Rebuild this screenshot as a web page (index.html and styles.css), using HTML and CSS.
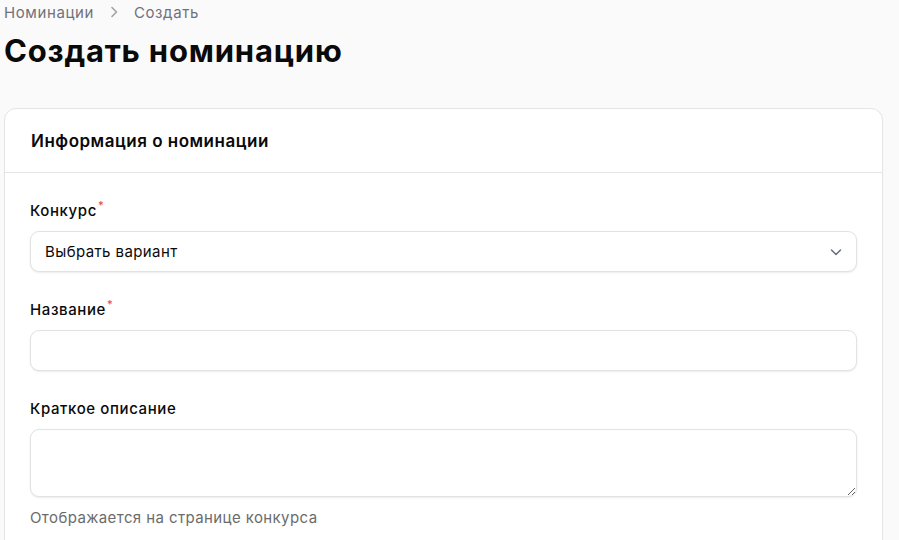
FILE: index.html
```html
<!DOCTYPE html>
<html lang="ru">
<head>
<meta charset="utf-8">
<title>Создать номинацию</title>
<link rel="stylesheet" href="styles.css">
</head>
<body>
<div class="page">
  <nav class="breadcrumbs">
    <a class="crumb" href="#">Номинации</a>
    <svg class="crumb-sep" viewBox="0 0 20 20" width="20" height="20" aria-hidden="true">
      <path d="M8 5.5 12.5 10 8 14.5" fill="none" stroke="currentColor" stroke-width="1.6" stroke-linecap="round" stroke-linejoin="round"/>
    </svg>
    <span class="crumb">Создать</span>
  </nav>
  <h1 class="page-title">Создать номинацию</h1>

  <form class="card">
    <div class="card-header">
      <h2 class="card-title">Информация о номинации</h2>
    </div>
    <div class="card-body">
      <div class="field">
        <label class="label">Конкурс<sup class="req">*</sup></label>
        <div class="control select">
          <span class="select-value">Выбрать вариант</span>
          <svg class="select-icon" viewBox="0 0 20 20" width="20" height="20" aria-hidden="true">
            <path d="M5.5 8 10 12.5 14.5 8" fill="none" stroke="currentColor" stroke-width="1.6" stroke-linecap="round" stroke-linejoin="round"/>
          </svg>
        </div>
      </div>
      <div class="field">
        <label class="label">Название<sup class="req">*</sup></label>
        <input class="control input" type="text">
      </div>
      <div class="field">
        <label class="label">Краткое описание</label>
        <textarea class="control textarea"></textarea>
        <p class="hint">Отображается на странице конкурса</p>
      </div>
    </div>
  </form>
</div>
</body>
</html>
```

FILE: styles.css
```css
* { box-sizing: border-box; }

html, body {
  margin: 0;
  background: #fafafa;
  font-family: Inter, "Noto Sans", sans-serif;
  color: #0a0a0a;
}

.page {
  padding: 0 16px 0 4px;
}

.breadcrumbs {
  display: flex;
  align-items: center;
  gap: 10px;
  height: 24px;
  font-size: 15px;
  letter-spacing: 0.6px;
  color: #71717a;
}

.crumb {
  color: inherit;
  text-decoration: none;
}

.crumb-sep {
  width: 20px;
  height: 20px;
  color: #a1a1aa;
}

.page-title {
  margin: 9px 0 0;
  font-size: 31px;
  line-height: 36px;
  font-weight: 700;
  letter-spacing: 0.8px;
}

.card {
  margin-top: 39px;
  background: #fff;
  border: 1px solid #e5e5e5;
  border-radius: 12px;
  box-shadow: 0 1px 2px rgba(0, 0, 0, 0.04);
}

.card-header {
  padding: 20px 26px 19px;
  border-bottom: 1px solid #e5e5e5;
}

.card-title {
  margin: 0;
  font-size: 17px;
  line-height: 24px;
  font-weight: 600;
  letter-spacing: 0.5px;
}

.card-body {
  padding: 24px 25px;
  display: flex;
  flex-direction: column;
  gap: 24px;
}

.field {
  display: flex;
  flex-direction: column;
}

.label {
  font-size: 15px;
  line-height: 28px;
  font-weight: 500;
  letter-spacing: 0.6px;
  margin-bottom: 6px;
}

.req {
  color: #ef4444;
  font-size: 11px;
  margin-left: 1px;
  vertical-align: 7px;
  line-height: 0;
}

.control {
  width: 100%;
  background: #fff;
  border: 1px solid #e2e2e2;
  border-radius: 9px;
  box-shadow: 0 1px 2px rgba(0, 0, 0, 0.08);
  font: inherit;
  font-size: 15px;
  letter-spacing: 0.4px;
  color: #0a0a0a;
  outline: none;
}

.select {
  height: 41px;
  display: flex;
  align-items: center;
  justify-content: space-between;
  padding: 0 10px 0 14px;
}

.select-icon {
  color: #6b7280;
  width: 20px;
  height: 20px;
}

.input {
  height: 41px;
  padding: 0 14px;
}

.textarea {
  height: 68px;
  padding: 8px 14px;
  resize: vertical;
  display: block;
}

.hint {
  margin: 11px 0 0;
  font-size: 15px;
  line-height: 20px;
  letter-spacing: 0.4px;
  color: #6b6b6b;
}
```
